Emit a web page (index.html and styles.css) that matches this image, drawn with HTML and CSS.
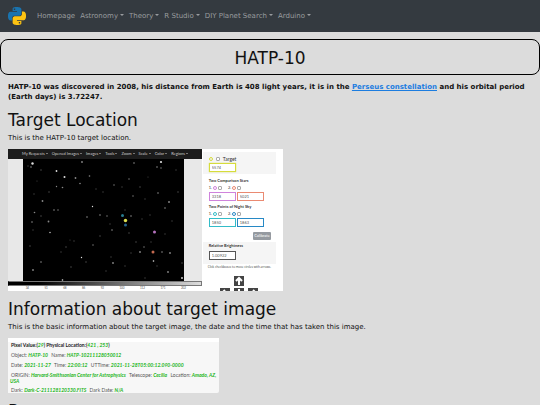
FILE: index.html
```html
<!DOCTYPE html>
<html lang="en">
<head>
  <meta charset="UTF-8" />
  <meta name="viewport" content="width=device-width, initial-scale=1.0" />
  <title>HATP-10</title>
  <link rel="stylesheet" href="styles.css">
</head>
<body>
  <nav class="navbar">
    <a class="brand" href="#" aria-label="Home">
      <svg viewBox="0 0 24 24">
        <path fill="#1a73ae" fill-rule="evenodd" d="M14.25.18l.9.2.73.26.59.3.45.32.34.34.25.34.16.33.1.3.04.26.02.2-.01.13V8.5l-.05.63-.13.55-.21.46-.26.38-.3.31-.33.25-.35.19-.35.14-.33.1-.3.07-.26.04-.21.02H8.77l-.69.05-.59.14-.5.22-.41.27-.33.32-.27.35-.2.36-.15.37-.1.35-.07.32-.04.27-.02.21v3.06H3.17l-.21-.03-.28-.07-.32-.12-.35-.18-.36-.26-.36-.36-.35-.46-.32-.59-.28-.73-.21-.88-.14-1.05-.05-1.23.06-1.22.16-1.04.24-.87.32-.71.36-.57.4-.44.42-.33.42-.24.4-.16.36-.1.32-.05.24-.01h.16l.06.01h8.16v-.83H6.18l-.01-2.75-.02-.37.05-.34.11-.31.17-.28.25-.26.31-.23.38-.2.44-.18.51-.15.58-.12.64-.1.71-.06.77-.04.84-.02 1.27.05zm-6.3 1.98l-.23.33-.08.41.08.41.23.34.33.22.41.09.41-.09.33-.22.23-.34.08-.41-.08-.41-.23-.33-.33-.22-.41-.09-.41.09z"/>
        <path fill="#fdc312" fill-rule="evenodd" d="M21.04 6.11l.28.06.32.12.35.18.36.27.36.35.35.47.32.59.28.73.21.88.14 1.04.05 1.23-.06 1.23-.16 1.04-.24.86-.32.71-.36.57-.4.45-.42.33-.42.24-.4.16-.36.09-.32.05-.24.02-.16-.01h-8.22v.82h5.84l.01 2.76.02.36-.05.34-.11.31-.17.29-.25.25-.31.24-.38.2-.44.17-.51.15-.58.13-.64.09-.71.07-.77.04-.84.01-1.27-.04-1.07-.14-.9-.2-.73-.25-.59-.3-.45-.33-.34-.34-.25-.34-.16-.33-.1-.3-.04-.25-.02-.2.01-.13v-5.34l.05-.64.13-.54.21-.46.26-.38.3-.32.33-.24.35-.2.35-.14.33-.1.3-.06.26-.04.21-.02.13-.01h5.84l.69-.05.59-.14.5-.21.41-.28.33-.32.27-.35.2-.36.15-.36.1-.35.07-.32.04-.28.02-.21V6.07h2.09l.14.01zm-6.47 14.25l-.23.33-.08.41.08.41.23.33.33.23.41.08.41-.08.33-.23.23-.33.08-.41-.08-.41-.23-.33-.33-.23-.41-.08-.41.08z"/>
      </svg>
    </a>
    <a class="nav-link" href="#">Homepage</a>
    <a class="nav-link dropdown" href="#">Astronomy</a>
    <a class="nav-link dropdown" href="#">Theory</a>
    <a class="nav-link dropdown" href="#">R Studio</a>
    <a class="nav-link dropdown" href="#">DIY Planet Search</a>
    <a class="nav-link dropdown" href="#">Arduino</a>
  </nav>

  <h1 class="title">HATP-10</h1>

  <main class="content">
    <p class="intro">HATP-10 was discovered in 2008, his distance from Earth is 408 light years, it is in the <a href="#">Perseus constellation</a> and his orbital period (Earth days) is 3.72247.</p>

    <h2>Target Location</h2>
    <p>This is the HATP-10 target location.</p>

    <div class="target">
      <div class="viewer">
        <div class="menu">
          <span>My Requests</span><span>Opened Images</span><span>Images</span><span>Tools</span><span>Zoom</span><span>Scale</span><span>Color</span><span>Regions</span>
        </div>
        <svg class="sky" viewBox="0 0 161 122">
          <rect width="161" height="122" fill="#000"/>
          <g fill="#ddd">
            <circle cx="9.500" cy="4.500" r="1.200"/><circle cx="33.500" cy="12" r=".9"/><circle cx="41.500" cy="18" r="1"/><circle cx="138" cy="3" r="1.100"/><circle cx="146" cy="43" r=".8"/><circle cx="69.500" cy="47.500" r=".7"/><circle cx="39.500" cy="121" r=".8"/><circle cx="159" cy="119" r=".9"/><circle cx="130.500" cy="102" r=".8"/><circle cx="27" cy="73.500" r=".7"/><circle cx="58.500" cy="98.500" r=".7"/>
          </g>
          <g fill="#888">
            <circle cx="8" cy="8" r=".8"/><circle cx="52.500" cy="19" r=".9"/><circle cx="59" cy="3" r=".9"/><circle cx="66.500" cy="17" r=".8"/><circle cx="57" cy="24.500" r=".8"/><circle cx="39.500" cy="28.500" r=".8"/><circle cx="33.500" cy="27.500" r=".7"/><circle cx="19.500" cy="42" r=".9"/><circle cx="11.500" cy="53.500" r=".8"/><circle cx="9" cy="63" r=".8"/><circle cx="25.500" cy="62.500" r=".9"/><circle cx="31" cy="51" r=".8"/><circle cx="35" cy="51" r=".7"/><circle cx="10" cy="111" r=".9"/><circle cx="18" cy="103" r=".8"/><circle cx="91" cy="26" r=".7"/><circle cx="106" cy="20" r=".7"/><circle cx="111" cy="4" r=".8"/><circle cx="134" cy="8" r=".8"/><circle cx="138" cy="9" r=".7"/><circle cx="135" cy="34" r=".8"/><circle cx="142" cy="49" r=".8"/><circle cx="110" cy="37" r=".7"/><circle cx="89" cy="71" r=".8"/><circle cx="117" cy="93" r=".9"/><circle cx="147" cy="94" r=".9"/><circle cx="145" cy="113" r=".9"/><circle cx="139" cy="93" r=".8"/><circle cx="121" cy="88" r=".7"/><circle cx="90" cy="104" r=".9"/><circle cx="77" cy="56" r=".8"/><circle cx="64" cy="58" r=".8"/><circle cx="108" cy="57" r=".8"/><circle cx="84" cy="57" r=".7"/><circle cx="70" cy="86" r=".7"/>
          </g>
          <g fill="#444">
            <circle cx="5" cy="7" r=".7"/><circle cx="18" cy="11" r=".8"/><circle cx="14" cy="22" r=".6"/><circle cx="26" cy="33" r=".8"/><circle cx="11" cy="35" r=".7"/><circle cx="18" cy="57" r=".8"/><circle cx="10" cy="71" r=".7"/><circle cx="7" cy="87" r=".8"/><circle cx="43" cy="88" r=".8"/><circle cx="38" cy="93" r=".7"/><circle cx="48" cy="108" r=".8"/><circle cx="63" cy="103" r=".8"/><circle cx="83" cy="112" r=".7"/><circle cx="77" cy="77" r=".8"/><circle cx="87" cy="65" r=".7"/><circle cx="80" cy="33" r=".7"/><circle cx="73" cy="30" r=".7"/><circle cx="99" cy="28" r=".7"/><circle cx="117" cy="28" r=".8"/><circle cx="125" cy="18" r=".6"/><circle cx="122" cy="40" r=".7"/><circle cx="155" cy="33" r=".8"/><circle cx="153" cy="11" r=".7"/><circle cx="149" cy="62" r=".7"/><circle cx="142" cy="75" r=".7"/><circle cx="119" cy="60" r=".7"/><circle cx="127" cy="56" r=".7"/><circle cx="106" cy="74" r=".8"/><circle cx="113" cy="83" r=".8"/><circle cx="128" cy="83" r=".7"/><circle cx="108" cy="94" r=".7"/><circle cx="102" cy="107" r=".7"/><circle cx="122" cy="119" r=".7"/><circle cx="134" cy="107" r=".7"/><circle cx="159" cy="104" r=".8"/><circle cx="51" cy="82" r=".7"/><circle cx="88" cy="98" r=".7"/><circle cx="102" cy="51" r=".7"/><circle cx="47" cy="81" r=".6"/>
          </g>
          <circle cx="99.500" cy="56.500" r="1.500" fill="#287b8e"/>
          <circle cx="102.500" cy="61.500" r="1.700" fill="#dde04f"/>
          <circle cx="102.500" cy="66" r="1.500" fill="#25638c"/>
          <circle cx="131.500" cy="73" r="1.500" fill="#b673bf"/>
          <circle cx="130" cy="93" r="1.500" fill="#c46a50"/>
        </svg>
        <div class="gradient"></div>
        <div class="scale">
          <span>34</span><span>51</span><span>68</span><span>86</span><span>92</span><span>100</span><span>112</span><span>171</span><span>202</span>
        </div>
      </div>

      <form class="panel">
        <div class="group shaded">
          <div class="row big"><i class="ring yellow"></i><input type="checkbox" id="target"><label for="target">Target</label></div>
          <div class="row"><input class="box yellow thick" type="text" value="5574" aria-label="Target position"></div>
        </div>
        <div class="group stars">
          <b>Two Comparison Stars</b>
          <div class="row">
            <label for="star1">1.</label><i class="ring purple"></i><input type="checkbox" id="star1">
            <label class="second" for="star2">2.</label><i class="ring red"></i><input type="checkbox" id="star2">
          </div>
          <div class="row"><input class="box purple" type="text" value="3318" aria-label="Star 1"><input class="box red" type="text" value="5021" aria-label="Star 2"></div>
        </div>
        <div class="group">
          <b>Two Points of Night Sky</b>
          <div class="row">
            <label for="sky1">1.</label><i class="ring teal"></i><input type="checkbox" id="sky1">
            <label class="second" for="sky2">2.</label><i class="ring blue"></i><input type="checkbox" id="sky2">
          </div>
          <div class="row"><input class="box teal" type="text" value="1850" aria-label="Sky 1"><input class="box blue" type="text" value="1863" aria-label="Sky 2"></div>
        </div>
        <button class="calibrate" type="button">Calibrate</button>
        <div class="group shaded brightness">
          <label for="brightness"><b>Relative Brightness</b></label>
          <div class="row"><input class="box" type="text" id="brightness" value="1.00922"></div>
        </div>
        <p class="hint">Click checkboxes to move circles with arrows.</p>
        <div class="arrows">
          <button type="button" class="up" aria-label="Up"><svg viewBox="0 0 10 10"><path d="M5 9V2M2 5l3-3 3 3"/></svg></button>
          <button type="button" class="left" aria-label="Left"><svg viewBox="0 0 10 10"><path d="M9 5H2M5 2L2 5l3 3"/></svg></button>
          <button type="button" aria-label="Down"><svg viewBox="0 0 10 10"><path d="M5 1v7M2 5l3 3 3-3"/></svg></button>
          <button type="button" aria-label="Right"><svg viewBox="0 0 10 10"><path d="M1 5h7M5 2l3 3-3 3"/></svg></button>
        </div>
      </form>
    </div>

    <h2>Information about target image</h2>
    <p>This is the basic information about the target image, the date and the time that has taken this image.</p>

    <div class="info">
      <p><b>Pixel Value:(<em>29</em>) Physical Location:(<em>421 , 253</em>)</b></p>
      <p><span>Object: <em>HATP-10</em></span> <span>Name: <em>HATP-10211128050012</em></span></p>
      <p><span>Date: <em>2021-11-27</em></span> <span>Time: <em>22:00:12</em></span> <span>UTTime: <em>2021-11-28T05:00:12.090-0000</em></span></p>
      <p><span>ORIGIN: <em>Harvard-Smithsonian Center for Astrophysics</em></span> <span>Telescope: <em>Cecilia</em></span> <span>Location: <em>Amado, AZ, USA</em></span></p>
      <p><span>Dark: <em>Dark-C-211128120330.FITS</em></span> <span>Dark Date: <em>N/A</em></span></p>
    </div>

    <h2>P</h2>
  </main>
</body>
</html>
```
FILE: styles.css
```css
* {
  box-sizing: border-box;
}

body {
  margin: 0;
  height: 100vh;
  overflow: hidden;
  background-color: #dcdcdc;
  color: #111;
  font-family: Verdana, 'DejaVu Sans', sans-serif;
  font-size: 7px;
  line-height: 10px;
}

p, h1, h2 {
  margin: 0;
}

.navbar {
  display: flex;
  align-items: center;
  gap: 5px;
  height: 32px;
  padding: 0 8px;
  background-color: #343a40;
}

.brand {
  margin-right: 6px;
}

.brand svg {
  display: block;
  width: 18px;
  height: 18px;
}

.nav-link {
  color: #999c9f;
  text-decoration: none;
  white-space: nowrap;
}

.dropdown::after {
  content: "";
  display: inline-block;
  margin-left: 2px;
  vertical-align: 2px;
  border-top: 2px solid;
  border-left: 2px solid transparent;
  border-right: 2px solid transparent;
}

.title {
  margin-top: 7px;
  padding: 8px 8px 6px;
  border: 1px solid #000;
  border-radius: 8px;
  text-align: center;
  font-size: 17px;
  font-weight: normal;
  line-height: 20px;
}

.content {
  padding: 7px 8px;
}

.intro {
  font-weight: bold;
}

.intro a {
  color: #1c7de0;
}

h2 {
  margin-top: 8px;
  margin-bottom: 3px;
  font-size: 17px;
  font-weight: normal;
  line-height: 20px;
}

/* star field and its control panel */
.target {
  display: flex;
  width: 275px;
  height: 142px;
  margin-top: 6px;
  overflow: hidden;
  background-color: #fff;
  font-family: Lato, 'Open Sans', sans-serif;
  font-size: 4px;
  line-height: 6px;
}

.viewer {
  display: flex;
  flex-direction: column;
  width: 194px;
  background-color: #e8e8e8;
}

.menu {
  display: flex;
  align-items: center;
  gap: 4px;
  height: 10px;
  padding-left: 14px;
  background-color: #1c1c1c;
  color: #ccc;
  white-space: nowrap;
}

.menu span::after {
  content: "";
  display: inline-block;
  margin-left: 1px;
  vertical-align: 1px;
  border-top: 1px solid;
  border-left: 1px solid transparent;
  border-right: 1px solid transparent;
}

.sky {
  display: block;
  width: 161px;
  height: 122px;
  margin-left: 15px;
}

.gradient {
  height: 5px;
  border: 1px solid #777;
  border-left-color: #000;
  background-image: linear-gradient(to right, #000 15%, #ddd);
}

.scale {
  display: flex;
  justify-content: space-around;
  height: 5px;
  padding: 0 8px 0 10px;
  background-color: #fff;
  color: #555;
  font-size: 3px;
  line-height: 5px;
}

.panel {
  display: flex;
  flex-direction: column;
  flex: 1;
  padding: 3px 7px 0 1px;
  color: #333;
}

.panel > * {
  flex-shrink: 0;
}

.group {
  padding: 0 6px;
}

.group b {
  display: block;
}

.shaded {
  height: 22px;
  padding-top: 3px;
  background-color: #f5f5f5;
}

.stars {
  margin: 4px 0 3px;
}

.row {
  display: flex;
  align-items: center;
  gap: 1px;
  min-height: 7px;
}

.row + .row {
  margin-top: 1px;
}

.row input[type="checkbox"] {
  width: 4px;
  height: 4px;
  margin: 0;
  appearance: none;
  border: 1px solid #aaa;
  border-radius: 1px;
  background-color: #fff;
}

.big {
  gap: 3px;
  font-size: 5px;
}

.second {
  margin-left: 5px;
}

.ring {
  width: 4px;
  height: 4px;
  border: 1px solid;
  border-radius: 50%;
}

.box {
  width: 27px;
  height: 9px;
  padding: 0 2px;
  border: 1px solid #555;
  background-color: #fff;
  color: #555;
  font: inherit;
}

.yellow {
  border-color: #d6dc3c;
}

.thick {
  box-shadow: 0 0 1px #d6dc3c;
}

.purple {
  border-color: #cf83dc;
}

.red {
  border-color: #ea8a72;
}

.teal {
  border-color: #33bcc8;
}

.blue {
  border-color: #2789c5;
}

.calibrate {
  align-self: flex-end;
  width: 18px;
  height: 8px;
  margin: 5px 5px 2px;
  padding: 0;
  border: none;
  border-radius: 1px;
  background-color: #959aa0;
  color: #fff;
  font: inherit;
}

.brightness {
  padding-top: 1px;
}

.brightness .row {
  margin-top: 2px;
}

.hint {
  padding: 0 5px;
  white-space: nowrap;
  font-family: 'Open Sans', sans-serif;
  font-size: 3px;
}

.arrows {
  display: grid;
  grid-template-columns: repeat(3, 10px);
  justify-content: center;
  gap: 2px 4px;
  margin-top: 6px;
}

.arrows button {
  height: 10px;
  padding: 0;
  border: none;
  background-color: #444;
}

.arrows .up {
  grid-column: 2;
}

.arrows .left {
  grid-column: 1;
}

.arrows svg {
  display: block;
  fill: none;
  stroke: #fff;
  stroke-width: 2;
}

/* image header data */
.info {
  width: 211px;
  height: 55px;
  margin-top: 6px;
  padding-left: 2px;
  overflow: hidden;
  border-top: 4px solid #fff;
  border-radius: 0 0 2px 0;
  background-color: #f7f7f7;
  color: #555;
  font-family: Lato, 'Open Sans', sans-serif;
  font-size: 5px;
  line-height: 6px;
}

.info p {
  margin-bottom: 4px;
}

/* the origin line wraps, so it sits closer to the next one */
.info p:nth-child(4) {
  margin-bottom: 3px;
}

.info b {
  padding-left: 1px;
  color: #222;
}

.info span {
  padding: 0 1px;
}

.info em {
  color: #22b522;
  font-weight: bold;
}
```
